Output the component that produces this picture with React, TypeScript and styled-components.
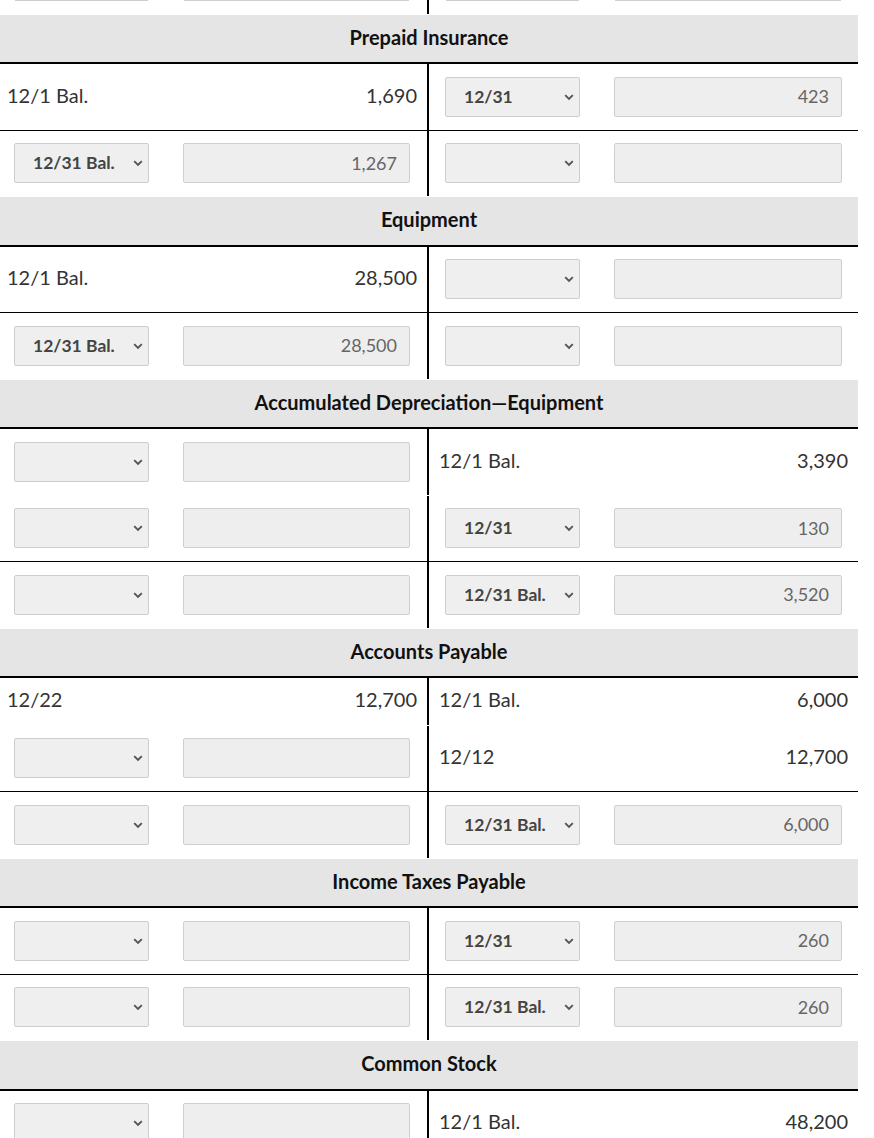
import React from 'react';
import styled, { createGlobalStyle } from 'styled-components';

const GlobalStyle = createGlobalStyle`
  html, body {
    margin: 0;
    padding: 0;
    background: #ffffff;
  }
  body {
    font-family: Lato, "Open Sans", Arial, sans-serif;
    color: #333333;
  }
`;

type Entry =
  | { kind: 'text'; date: string; amount: string }
  | { kind: 'field'; date?: string; amount?: string };

type Row = {
  left: Entry;
  right: Entry;
  line?: boolean;
};

type Account = {
  name?: string;
  rows: Row[];
};

const empty: Entry = { kind: 'field' };

const accounts: Account[] = [
  {
    rows: [{ left: empty, right: empty }],
  },
  {
    name: 'Prepaid Insurance',
    rows: [
      {
        left: { kind: 'text', date: '12/1 Bal.', amount: '1,690' },
        right: { kind: 'field', date: '12/31', amount: '423' },
        line: true,
      },
      { left: { kind: 'field', date: '12/31 Bal.', amount: '1,267' }, right: empty },
    ],
  },
  {
    name: 'Equipment',
    rows: [
      {
        left: { kind: 'text', date: '12/1 Bal.', amount: '28,500' },
        right: empty,
        line: true,
      },
      { left: { kind: 'field', date: '12/31 Bal.', amount: '28,500' }, right: empty },
    ],
  },
  {
    name: 'Accumulated Depreciation\u2014Equipment',
    rows: [
      { left: empty, right: { kind: 'text', date: '12/1 Bal.', amount: '3,390' } },
      { left: empty, right: { kind: 'field', date: '12/31', amount: '130' }, line: true },
      { left: empty, right: { kind: 'field', date: '12/31 Bal.', amount: '3,520' } },
    ],
  },
  {
    name: 'Accounts Payable',
    rows: [
      {
        left: { kind: 'text', date: '12/22', amount: '12,700' },
        right: { kind: 'text', date: '12/1 Bal.', amount: '6,000' },
      },
      {
        left: empty,
        right: { kind: 'text', date: '12/12', amount: '12,700' },
        line: true,
      },
      { left: empty, right: { kind: 'field', date: '12/31 Bal.', amount: '6,000' } },
    ],
  },
  {
    name: 'Income Taxes Payable',
    rows: [
      { left: empty, right: { kind: 'field', date: '12/31', amount: '260' }, line: true },
      { left: empty, right: { kind: 'field', date: '12/31 Bal.', amount: '260' } },
    ],
  },
  {
    name: 'Common Stock',
    rows: [{ left: empty, right: { kind: 'text', date: '12/1 Bal.', amount: '48,200' } }],
  },
];

const Page = styled.div`
  width: 858px;
  overflow: hidden;
`;

const Ledger = styled.div`
  margin-top: -52px;
`;

const Section = styled.section`
  display: flex;
  flex-direction: column;
`;

const Header = styled.div`
  height: 49.5px;
  box-sizing: border-box;
  padding-bottom: 3px;
  display: flex;
  align-items: center;
  justify-content: center;
  background: #e5e5e5;
  border-bottom: 2px solid #000000;
  font-size: 20px;
  font-weight: 700;
  color: #111111;
`;

const RowGrid = styled.div<{ $tall: boolean; $line?: boolean }>`
  display: grid;
  grid-template-columns: 1fr 1fr;
  height: ${(p) => (p.$tall ? '65.5px' : '46.5px')};
  border-bottom: 1px solid ${(p) => (p.$line ? '#000000' : 'transparent')};
`;

const Side = styled.div<{ $left?: boolean }>`
  display: flex;
  align-items: center;
  min-width: 0;
  border-right: ${(p) => (p.$left ? '2px solid #000000' : 'none')};
`;

const FieldSide = styled(Side)`
  gap: 34px;
  padding: ${(p) => (p.$left ? '0 17px 0 14px' : '0 16px')};
`;

const TextSide = styled(Side)`
  justify-content: space-between;
  box-sizing: border-box;
  padding: ${(p) => (p.$left ? '0 10px 4px 7px' : '0 10px 4px 10px')};
  font-size: 20px;
  color: #333333;
`;

const SelectWrap = styled.div`
  position: relative;
  flex: 0 0 135px;
  height: 40px;
`;

const Select = styled.select`
  appearance: none;
  width: 100%;
  height: 100%;
  box-sizing: border-box;
  margin: 0;
  padding: 0 28px 1px 18px;
  background: #efefef;
  border: 1px solid #cdcdcd;
  border-radius: 2px;
  font-family: Lato, "Open Sans", Arial, sans-serif;
  font-size: 17.5px;
  font-weight: 700;
  color: #444444;
  outline: none;
`;

const Chevron = styled.svg`
  position: absolute;
  right: 6px;
  top: 50%;
  width: 10px;
  height: 7px;
  margin-top: -3px;
  pointer-events: none;
`;

const Amount = styled.input`
  flex: 1 1 auto;
  min-width: 0;
  height: 40px;
  box-sizing: border-box;
  margin: 0;
  padding: 0 12px 1px;
  background: #eeeeee;
  border: 1px solid #cfcfcf;
  border-radius: 2px;
  text-align: right;
  font-family: Lato, "Open Sans", Arial, sans-serif;
  font-size: 18px;
  color: #666666;
  outline: none;
`;

const DateSelect = ({ value }: { value?: string }) => (
  <SelectWrap>
    <Select value={value ?? ''} onChange={() => {}}>
      <option value="">{''}</option>
      {value && <option value={value}>{value}</option>}
    </Select>
    <Chevron viewBox="0 0 10 7">
      <path d="M1.2 1.2 L5 5 L8.8 1.2" fill="none" stroke="#555555" strokeWidth="1.9" />
    </Chevron>
  </SelectWrap>
);

const EntryCell = ({ entry, left }: { entry: Entry; left?: boolean }) => {
  if (entry.kind === 'text') {
    return (
      <TextSide $left={left}>
        <span>{entry.date}</span>
        <span>{entry.amount}</span>
      </TextSide>
    );
  }
  return (
    <FieldSide $left={left}>
      <DateSelect value={entry.date} />
      <Amount readOnly value={entry.amount ?? ''} />
    </FieldSide>
  );
};

export default function App() {
  return (
    <Page>
      <GlobalStyle />
      <Ledger>
        {accounts.map((account, i) => (
          <Section key={i}>
            {account.name && <Header>{account.name}</Header>}
            {account.rows.map((row, j) => (
              <RowGrid
                key={j}
                $tall={row.left.kind === 'field' || row.right.kind === 'field'}
                $line={row.line}
              >
                <EntryCell entry={row.left} left />
                <EntryCell entry={row.right} />
              </RowGrid>
            ))}
          </Section>
        ))}
      </Ledger>
    </Page>
  );
}
